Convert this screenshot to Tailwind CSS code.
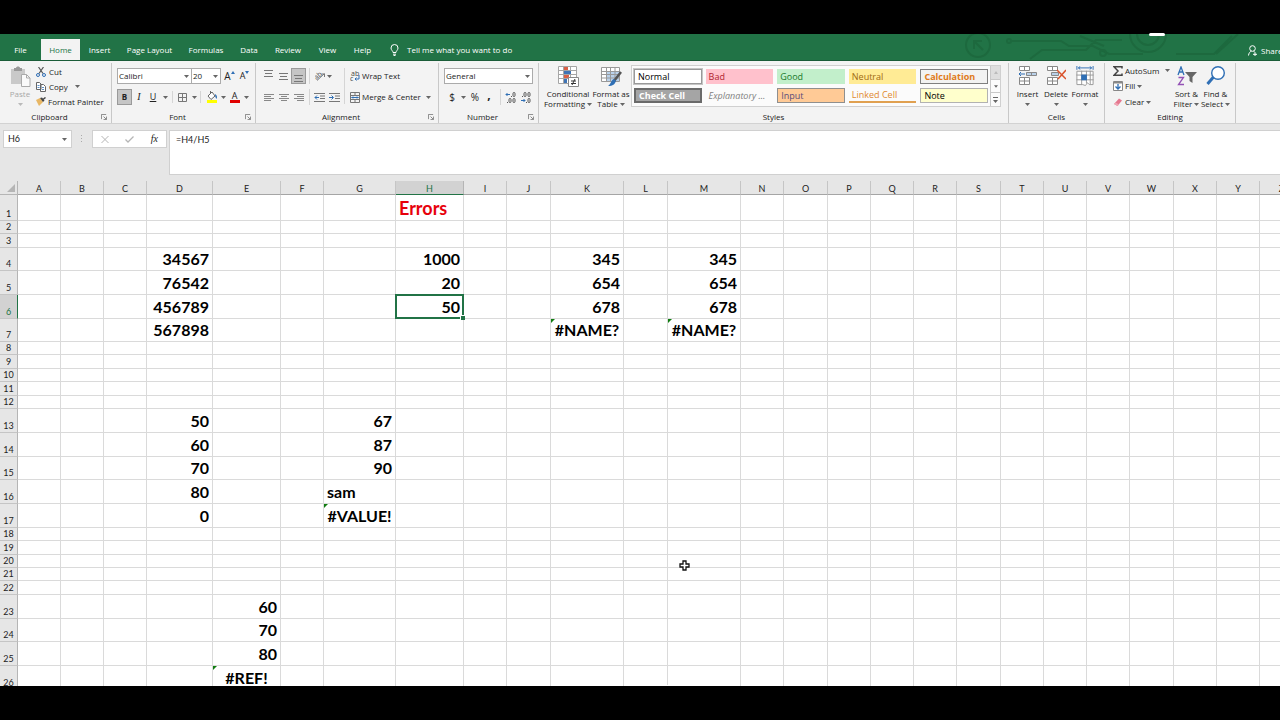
<!DOCTYPE html>
<html lang="en">
<head>
  <meta charset="UTF-8">
  <meta name="viewport" content="width=device-width, initial-scale=1.0">
  <title>Excel errors</title>
  <script src="https://cdn.jsdelivr.net/npm/@tailwindcss/browser@4"></script>
</head>
<body class="bg-black">
  <!-- Shared icons -->
  <svg class="hidden">
    <symbol id="caret" viewBox="0 0 5 3"><path d="M0 0h5L2.5 3z" fill="#666"/></symbol>
    <symbol id="launcher" viewBox="0 0 7 7"><path d="M.5 6V.5H6M3 3l3 3M6.5 3v3.5H3" fill="none" stroke="#777"/></symbol>
  </svg>

  <div class="relative flex h-screen flex-col overflow-hidden py-[34px] font-['Open_Sans',sans-serif] text-[8px] leading-[10px] text-[#222]">

    <!-- Tabs -->
    <header class="relative flex h-[27px] shrink-0 items-end overflow-hidden border-b border-[#1a5c38] bg-[#217346] text-white">
      <svg class="absolute right-0 top-0 h-[26px] w-[320px]" viewBox="0 0 320 26" fill="none" stroke="#1d693e" stroke-width="2">
        <circle cx="18" cy="11" r="12"/><path d="M14 15V7h8M14 7l9 9"/>
        <circle cx="49" cy="7" r="2"/><path d="M51 7h50l8 5h24l16 8h34M70 25l12-9h44l10-10h26M216 20h38l18-18M120 2l24 10"/>
        <circle cx="188" cy="0" r="18"/><circle cx="188" cy="0" r="11"/><circle cx="143" cy="19" r="3"/><path d="M256 20l22-20"/>
      </svg>
      <nav class="flex h-[21px] items-stretch text-center">
        <a href="#" class="flex w-[41px] items-center justify-center">File</a>
        <a href="#" class="flex w-[39px] items-center justify-center bg-[#f3f3f3] text-[#217346]">Home</a>
        <a href="#" class="flex w-[39px] items-center justify-center">Insert</a>
        <a href="#" class="flex w-[61px] items-center justify-center">Page Layout</a>
        <a href="#" class="flex w-[52px] items-center justify-center">Formulas</a>
        <a href="#" class="flex w-[34px] items-center justify-center">Data</a>
        <a href="#" class="flex w-[44px] items-center justify-center">Review</a>
        <a href="#" class="flex w-[35px] items-center justify-center">View</a>
        <a href="#" class="flex w-[35px] items-center justify-center">Help</a>
      </nav>
      <button class="ml-2.5 flex h-[21px] items-center gap-2">
        <svg class="h-[12px] w-[9px]" viewBox="0 0 9 12" fill="none" stroke="#fff"><path d="M3 8.5C3 6.8 1 6.200 1 4a3.500 3.500 0 0 1 7 0c0 2.200-2 2.800-2 4.500zM3 10.200h3M3.500 11.500h2"/></svg>
        Tell me what you want to do
      </button>
      <button class="absolute left-[1248px] top-[6px] flex h-[21px] items-center gap-1">
        <svg class="h-[11px] w-[9px]" viewBox="0 0 9 11" fill="none" stroke="#fff"><circle cx="4.500" cy="3.500" r="2.800"/><path d="M.5 10.500C.8 8 2 6.500 3.500 6.200M5.500 6.200c.8.300 1.200.8 1.500 1.300M5 9.300h4M7 7.500v3.500"/></svg>
        Share
      </button>
    </header>

    <!-- Ribbon -->
    <section class="flex h-[63px] shrink-0 border-b border-[#d2d2d2] bg-[#f3f3f3] pt-0.5">

      <!-- Clipboard -->
      <div class="flex w-[112px] shrink-0 flex-col border-r border-[#c8c8c8]">
        <div class="flex h-[49px] gap-1 pl-2">
          <button class="flex w-6 flex-col items-center text-[#a8a8a8]">
            <svg class="mt-[3px] h-[21px] w-[21px]" viewBox="0 0 21 21"><path d="M1 3h14v15H1z" fill="#c9c9c9"/><path d="M4 2h2c0-2 4-2 4 0h2v3H4z" fill="#999"/><path d="M11.500 8.500h5l3.500 3.500v8.500h-8.500z" fill="#fafafa" stroke="#aaa"/><path d="M16.500 8.500V12H20" fill="none" stroke="#aaa"/></svg>
            <span class="mt-0.5">Paste</span>
            <svg class="mt-1 h-[3px] w-[5px] opacity-40"><use href="#caret"/></svg>
          </button>
          <div class="flex flex-col pt-px">
            <button class="flex h-[15px] items-center gap-[3px]">
              <svg class="h-[10px] w-[10px]" viewBox="0 0 10 10" fill="none"><path d="M2.500 0l4.500 6.500M7.500 0L3 6.500" stroke="#555" stroke-width="1.200"/><circle cx="2" cy="8" r="1.500" stroke="#2f6fb5"/><circle cx="8" cy="8" r="1.500" stroke="#2f6fb5"/></svg>
              Cut
            </button>
            <button class="flex h-[15px] items-center gap-[3px]">
              <svg class="h-[10px] w-[10px]" viewBox="0 0 10 10" fill="#fff" stroke="#666"><path d="M.5.5h3l1.500 1.500v5.500H.5zM4.500 2.500h3L9.500 4.500v5h-5z"/><path d="M1.500 3.500h2M1.500 5.500h2M6 5.500h2M6 7.500h2" stroke="#5b8fc7"/></svg>
              Copy
              <svg class="ml-1 h-[3px] w-[5px]"><use href="#caret"/></svg>
            </button>
            <button class="flex h-[15px] items-center gap-[2px]">
              <svg class="h-[9px] w-[10px]" viewBox="0 0 10 9"><path d="M0 3l4-2 3 4-4 4z" fill="#e8b765"/><path d="M4 1l2-.500 2.500 3L7 5z" fill="#444"/><path d="M7 2.500L9.500.5" stroke="#444" stroke-width="1.500"/></svg>
              Format Painter
            </button>
          </div>
        </div>
        <div class="flex items-center pr-0.5"><span class="flex-1 text-center">Clipboard</span><button class="p-[2px]" aria-label="Clipboard settings"><svg class="h-[6px] w-[6px]"><use href="#launcher"/></svg></button></div>
      </div>

      <!-- Font -->
      <div class="flex w-[144px] shrink-0 flex-col border-r border-[#c8c8c8]">
        <div class="flex h-[49px] flex-col gap-[5px] pl-[5px] pt-[5px]">
          <div class="flex h-4 items-center">
            <div class="relative h-4 w-[75px]">
              <select aria-label="Font" class="h-4 w-full appearance-none border border-[#ababab] bg-white pl-px leading-[14px]"><option>Calibri</option></select>
              <svg class="pointer-events-none absolute right-[3px] top-[7px] h-[3px] w-[5px]"><use href="#caret"/></svg>
            </div>
            <div class="relative h-4 w-[29px]">
              <select aria-label="Font size" class="h-4 w-full appearance-none border border-l-0 border-[#ababab] bg-white pl-px leading-[14px]"><option>20</option></select>
              <svg class="pointer-events-none absolute right-[3px] top-[7px] h-[3px] w-[5px]"><use href="#caret"/></svg>
            </div>
            <button class="ml-px flex w-[15px] justify-center text-[10px]">A<svg class="h-[3px] w-[4px]" viewBox="0 0 4 3"><path d="M0 3l2-3 2 3z" fill="#2f6fb5"/></svg></button>
            <button class="flex w-[15px] justify-center text-[9px]">A<svg class="h-[3px] w-[4px]" viewBox="0 0 4 3"><path d="M0 0h4L2 3z" fill="#2f6fb5"/></svg></button>
          </div>
          <div class="flex h-4 items-center">
            <button class="h-4 w-[15px] border border-[#9a9a9a] bg-[#c5c5c5] font-bold">B</button>
            <button class="w-[14px] font-['Liberation_Serif',serif] text-[10px] italic">I</button>
            <button class="w-[14px] text-[9px] underline">U</button>
            <button class="flex w-[10px] justify-center" aria-label="Underline style"><svg class="h-[3px] w-[5px]"><use href="#caret"/></svg></button>
            <i class="mx-0.5 h-3 w-px bg-[#d5d5d5]"></i>
            <button class="flex w-[15px] justify-center" aria-label="Borders"><svg class="h-[9px] w-[9px]" viewBox="0 0 9 9" fill="none" stroke="#777"><path d="M.5.5h8v8h-8zM4.500 0v9M0 4.500h9"/></svg></button>
            <button class="flex w-[8px] justify-center" aria-label="Border style"><svg class="h-[3px] w-[5px]"><use href="#caret"/></svg></button>
            <i class="mx-0.5 h-3 w-px bg-[#d5d5d5]"></i>
            <button class="flex w-[17px] justify-center" aria-label="Fill colour"><svg class="h-[12px] w-[12px]" viewBox="0 0 12 12"><path d="M2 5l4-4 3 4-4 3.500z" fill="#fff" stroke="#666"/><path d="M4.500 3V0" stroke="#666"/><path d="M9 3c2 1 2.500 3 1.500 5C9.500 7 9 5 9 3" fill="#2f6fb5"/><path d="M1 9h10v3H1z" fill="#ff0"/></svg></button>
            <button class="flex w-[7px] justify-center" aria-label="Fill colours"><svg class="h-[3px] w-[5px]"><use href="#caret"/></svg></button>
            <button class="flex w-[15px] flex-col items-center text-[9px] leading-[9px]">A<span class="h-[3px] w-[10px] bg-[#e00000]"></span></button>
            <button class="flex w-[8px] justify-center" aria-label="Font colours"><svg class="h-[3px] w-[5px]"><use href="#caret"/></svg></button>
          </div>
        </div>
        <div class="flex items-center pr-0.5"><span class="flex-1 text-center">Font</span><button class="p-[2px]" aria-label="Font settings"><svg class="h-[6px] w-[6px]"><use href="#launcher"/></svg></button></div>
      </div>

      <!-- Alignment -->
      <div class="flex w-[183px] shrink-0 flex-col border-r border-[#c8c8c8]">
        <div class="flex h-[49px] items-start pl-[5px] pt-[5px]">
          <div class="flex flex-col gap-[5px]">
            <div class="flex h-4 items-center">
              <button class="flex h-4 w-[15px] justify-center pt-0.5" aria-label="Top align"><svg class="h-[7px] w-[9px]" viewBox="0 0 9 7" stroke="#777"><path d="M0 .5h9M1 3.500h7M0 6.500h9"/></svg></button>
              <button class="flex h-4 w-[15px] items-center justify-center" aria-label="Middle align"><svg class="h-[7px] w-[9px]" viewBox="0 0 9 7" stroke="#777"><path d="M0 .5h9M1 3.500h7M0 6.500h9"/></svg></button>
              <button class="flex h-4 w-[15px] items-end justify-center border border-[#9a9a9a] bg-[#c5c5c5] pb-px" aria-label="Bottom align"><svg class="h-[7px] w-[9px]" viewBox="0 0 9 7" stroke="#777"><path d="M0 .5h9M1 3.500h7M0 6.500h9"/></svg></button>
              <i class="ml-[3px] mr-[2px] h-4 w-px bg-[#d5d5d5]"></i>
              <button class="flex w-[30px] items-center gap-[2px] pl-[3px]" aria-label="Orientation">
                <svg class="h-[10px] w-[10px]" viewBox="0 0 10 10"><path d="M2 9.500L9.500 2.500M6.500 3h3v3" fill="none" stroke="#777"/><text x="-1" y="7" font-size="7" fill="#444" transform="rotate(-40 3 5)">ab</text></svg>
                <svg class="h-[3px] w-[5px]"><use href="#caret"/></svg>
              </button>
            </div>
            <div class="flex h-4 items-center">
              <button class="flex w-[15px] justify-center" aria-label="Align left"><svg class="h-[7px] w-[10px]" viewBox="0 0 10 7" stroke="#888"><path d="M0 .5h10M0 2.500h7M0 4.500h10M0 6.500h7"/></svg></button>
              <button class="flex w-[15px] justify-center" aria-label="Centre"><svg class="h-[7px] w-[10px]" viewBox="0 0 10 7" stroke="#888"><path d="M0 .5h10M2 2.500h6M0 4.500h10M2 6.500h6"/></svg></button>
              <button class="flex w-[15px] justify-center" aria-label="Align right"><svg class="h-[7px] w-[10px]" viewBox="0 0 10 7" stroke="#888"><path d="M0 .5h10M3 2.500h7M0 4.500h10M3 6.500h7"/></svg></button>
              <i class="ml-[3px] mr-[2px] h-4 w-px bg-[#d5d5d5]"></i>
              <button class="flex w-[15px] justify-center" aria-label="Decrease indent"><svg class="h-[9px] w-[11px]" viewBox="0 0 11 9" fill="none" stroke="#777"><path d="M0 .5h11M6 3h5M6 5.500h5M0 8.500h11"/><path d="M5 4.500H1M3 2.500l-2 2 2 2" stroke="#2f6fb5"/></svg></button>
              <button class="flex w-[15px] justify-center" aria-label="Increase indent"><svg class="h-[9px] w-[11px]" viewBox="0 0 11 9" fill="none" stroke="#777"><path d="M0 .5h11M6 3h5M6 5.500h5M0 8.500h11"/><path d="M0 4.500h4M2.500 2.500l2 2-2 2" stroke="#2f6fb5"/></svg></button>
            </div>
          </div>
          <i class="ml-[2px] mr-[5px] h-9 w-px bg-[#d5d5d5]"></i>
          <div class="flex flex-col gap-[5px]">
            <button class="flex h-4 items-center gap-[2px]">
              <svg class="h-[11px] w-[10px]" viewBox="0 0 10 11"><text x="1" y="5" font-size="7" fill="#444">ab</text><text x="0" y="10" font-size="7" fill="#444">c</text><path d="M9 4v4H5M6.500 6.500L5 8l1.500 1.500" fill="none" stroke="#2f6fb5"/></svg>
              Wrap Text
            </button>
            <button class="flex h-4 items-center gap-[2px]">
              <svg class="h-[11px] w-[10px]" viewBox="0 0 10 11" fill="none" stroke="#777"><path d="M.5.5h9v10h-9zM0 3.500h10M0 7.500h10M5 0v3.500M5 7.500V11"/><path d="M1.500 5.500h7M3 4.500l-1 1 1 1M7 4.500l1 1-1 1" stroke="#2f6fb5"/></svg>
              Merge &amp; Center
              <svg class="ml-[3px] h-[3px] w-[5px]"><use href="#caret"/></svg>
            </button>
          </div>
        </div>
        <div class="flex items-center pr-0.5"><span class="flex-1 text-center">Alignment</span><button class="p-[2px]" aria-label="Alignment settings"><svg class="h-[6px] w-[6px]"><use href="#launcher"/></svg></button></div>
      </div>

      <!-- Number -->
      <div class="flex w-[100px] shrink-0 flex-col border-r border-[#c8c8c8]">
        <div class="flex h-[49px] flex-col gap-[5px] pl-[5px] pt-[5px]">
          <div class="relative h-4 w-[89px]">
            <select aria-label="Number format" class="h-4 w-full appearance-none border border-[#ababab] bg-white pl-px leading-[14px]"><option>General</option></select>
            <svg class="pointer-events-none absolute right-[3px] top-[7px] h-[3px] w-[5px]"><use href="#caret"/></svg>
          </div>
          <div class="flex h-4 items-center">
            <button class="w-4 text-[10px]">$</button>
            <button class="flex w-[7px] justify-center" aria-label="Currency"><svg class="h-[3px] w-[5px]"><use href="#caret"/></svg></button>
            <button class="w-4 text-[10px]">%</button>
            <button class="w-3 pb-1 text-[12px] font-bold">,</button>
            <i class="ml-[5px] mr-[2px] h-4 w-px bg-[#d5d5d5]"></i>
            <button class="flex w-[15px] justify-center" aria-label="Increase decimal"><svg class="h-[11px] w-[11px]" viewBox="0 0 11 11"><path d="M5 2.500H1M2.500 1L1 2.500 2.500 4" fill="none" stroke="#2f6fb5"/><g fill="none" stroke="#555"><rect x="8" y=".5" width="2" height="4" rx="1"/><rect x="4" y="6.500" width="2" height="4" rx="1"/><rect x="8" y="6.500" width="2" height="4" rx="1"/></g><path d="M6 4h1v1H6zM2 10h1v1H2z" fill="#555"/></svg></button>
            <button class="flex w-[15px] justify-center" aria-label="Decrease decimal"><svg class="h-[11px] w-[11px]" viewBox="0 0 11 11"><path d="M1 8.500h4M3.500 7L5 8.500 3.500 10" fill="none" stroke="#2f6fb5"/><g fill="none" stroke="#555"><rect x="4" y=".5" width="2" height="4" rx="1"/><rect x="8" y=".5" width="2" height="4" rx="1"/><rect x="8" y="6.500" width="2" height="4" rx="1"/></g><path d="M2 4h1v1H2zM6 10h1v1H6z" fill="#555"/></svg></button>
          </div>
        </div>
        <div class="flex items-center pr-0.5"><span class="flex-1 text-center">Number</span><button class="p-[2px]" aria-label="Number settings"><svg class="h-[6px] w-[6px]"><use href="#launcher"/></svg></button></div>
      </div>

      <!-- Styles -->
      <div class="flex w-[470px] shrink-0 flex-col border-r border-[#c8c8c8]">
        <div class="flex h-[49px] pl-1.5">
          <button class="flex w-[46px] flex-col items-center">
            <svg class="mt-[3px] h-[21px] w-[21px]" viewBox="0 0 21 21" fill="none"><path d="M.5.5h18v17H.5zM0 4.500h19M0 8.500h19M0 12.500h19M5.500 0v18M12.500 0v18" stroke="#a5a5a5" fill="#fff"/><path d="M6 1h4v3H6zM6 9h5v3H6z" fill="#d95f45"/><path d="M6 5h7v3H6zM6 13h3v4H6z" fill="#3f74b5"/><path d="M10.500 11.500h10v9h-10z" fill="#fff" stroke="#888"/><path d="M13 15h5M13 17.500h5M17 13l-3 6" stroke="#333"/></svg>
            <span class="mt-0.5">Conditional</span>
            <span class="flex items-center gap-0.5">Formatting <svg class="h-[3px] w-[5px]"><use href="#caret"/></svg></span>
          </button>
          <button class="flex w-10 flex-col items-center">
            <svg class="mt-[3px] h-[21px] w-[21px]" viewBox="0 0 21 21" fill="none"><path d="M.5 1.500h18v14H.5z" fill="#fff"/><path d="M5 5h14v10H5z" fill="#b9d1ea"/><path d="M.5 1.500h18v14H.5zM0 5.500h19M0 8.500h19M0 12H19M5.500 1v15M9.500 1v15M14 1v15" stroke="#999"/><path d="M20 6l-7 9" stroke="#555" stroke-width="2.500"/><path d="M13 13l2 2c-1 3-3 5-8 5 3-2 3-6 6-7" fill="#2f6fb5"/></svg>
            <span class="mt-0.5 whitespace-nowrap">Format as</span>
            <span class="flex items-center gap-0.5">Table <svg class="h-[3px] w-[5px]"><use href="#caret"/></svg></span>
          </button>
          <div class="mt-0.5 flex h-[42px] w-[370px] border border-[#d0d0d0] bg-[#fbfbfb]">
            <div class="grid flex-1 grid-cols-5 grid-rows-2 gap-1 px-0.5 py-[3px] text-left text-[9px] *:px-[3px] *:text-left">
              <button class="border border-[#999] bg-white text-black outline outline-[#c5c5c5]">Normal</button>
              <button class="bg-[#ffc1cc] text-[#b01e2e]">Bad</button>
              <button class="bg-[#c2efcb] text-[#1a7a2a]">Good</button>
              <button class="bg-[#ffeb95] text-[#a06a10]">Neutral</button>
              <button class="border border-[#7f7f7f] bg-[#f2f2f2] font-bold text-[#e07a20]">Calculation</button>
              <button class="border-2 border-[#6a6a6a] bg-[#a5a5a5] font-bold text-white">Check Cell</button>
              <button class="whitespace-nowrap italic text-[#7f7f7f]">Explanatory ...</button>
              <button class="border border-[#8f8f8f] bg-[#ffca96] text-[#5a4a7a]">Input</button>
              <button class="border-b-2 border-[#e0a050] text-[#e08a30]">Linked Cell</button>
              <button class="border border-[#b2b2b2] bg-[#ffffcc] text-black">Note</button>
            </div>
            <div class="flex w-[10px] flex-col divide-y divide-[#c8c8c8] border-l border-[#c8c8c8]">
              <button class="flex flex-1 items-center justify-center bg-[#dedede]" aria-label="Previous styles"><svg class="h-[3px] w-[4px]" viewBox="0 0 4 3"><path d="M0 3l2-3 2 3z" fill="#bbb"/></svg></button>
              <button class="flex flex-1 items-center justify-center" aria-label="Next styles"><svg class="h-[3px] w-[4px]"><use href="#caret"/></svg></button>
              <button class="flex flex-1 items-center justify-center" aria-label="More styles"><svg class="h-[6px] w-[5px]" viewBox="0 0 5 6"><path d="M0 0h5v1H0zM0 3h5L2.500 6z" fill="#666"/></svg></button>
            </div>
          </div>
        </div>
        <span class="text-center">Styles</span>
      </div>

      <!-- Cells -->
      <div class="flex w-[96px] shrink-0 flex-col border-r border-[#c8c8c8]">
        <div class="flex h-[49px] pl-1">
          <button class="flex w-[29px] flex-col items-center">
            <svg class="mt-[3px] h-[20px] w-[19px]" viewBox="0 0 19 20" fill="#fff" stroke="#888"><path d="M1.500.5h10v4h-10zM6.500.5v4M1.500 11.500h10v7h-10zM1.500 15h10M6.500 11.500v7"/><path d="M8.500 6.500h10v3h-10zM13.500 6.500v3" fill="#b9d1ea"/><path d="M7 8H1M3 6L1 8l2 2" fill="none" stroke="#2f6fb5"/></svg>
            <span class="mt-[3px]">Insert</span>
            <svg class="mt-1 h-[3px] w-[5px]"><use href="#caret"/></svg>
          </button>
          <button class="flex w-[28px] flex-col items-center">
            <svg class="mt-[3px] h-[20px] w-[20px]" viewBox="0 0 20 20" fill="#fff" stroke="#888"><path d="M1.500.5h10v4h-10zM6.500.5v4M1.500 11.500h10v7h-10zM1.500 15h10M6.500 11.500v7"/><path d="M5.500 6.500h7v3h-7z" fill="#b9d1ea"/><path d="M11 4l9 9M20 4l-8 9" stroke="#d9532c" stroke-width="1.500"/></svg>
            <span class="mt-[3px]">Delete</span>
            <svg class="mt-1 h-[3px] w-[5px]"><use href="#caret"/></svg>
          </button>
          <button class="flex w-[30px] flex-col items-center">
            <svg class="mt-[3px] h-[20px] w-[20px]" viewBox="0 0 20 21" fill="none" stroke="#999"><path d="M1.500 5.500h17v14h-4l-2-2-2 3-3-1h-6zM1 9.500h18M1 14.500h18M6.500 5v15M11.500 5v13M15.500 5v14" fill="#fff"/><path d="M6 9h6v6H6z" fill="#2f6fb5" stroke="none"/><path d="M1.500 0v4M18.500 0v4M3 2h14M5 .5L3 2l2 1.500M15 .5L17 2l-2 1.500" stroke="#2f6fb5"/></svg>
            <span class="mt-[3px]">Format</span>
            <svg class="mt-1 h-[3px] w-[5px]"><use href="#caret"/></svg>
          </button>
        </div>
        <span class="text-center">Cells</span>
      </div>

      <!-- Editing -->
      <div class="flex w-[131px] shrink-0 flex-col border-r border-[#c8c8c8]">
        <div class="flex h-[49px] pl-2">
          <div class="flex w-[60px] flex-col">
            <button class="flex h-[15px] items-center gap-[2px]">
              <svg class="h-[10px] w-[10px]" viewBox="0 0 10 10" fill="none" stroke="#444" stroke-width="1.500"><path d="M9 2.500V.8H1L5 5 1 9.200h8V7.500"/></svg>
              AutoSum
              <svg class="ml-1 h-[3px] w-[5px]"><use href="#caret"/></svg>
            </button>
            <button class="flex h-4 items-center gap-[2px]">
              <svg class="h-[10px] w-[10px]" viewBox="0 0 10 10" fill="#fff" stroke="#888"><path d="M.5.5h9v9h-9z"/><path d="M1 1h8v1H1z" fill="#888"/><path d="M5 3v5M2.500 5.500L5 8l2.500-2.500" fill="none" stroke="#2f6fb5" stroke-width="1.300"/></svg>
              Fill
              <svg class="h-[3px] w-[5px]"><use href="#caret"/></svg>
            </button>
            <button class="flex h-4 items-center gap-[2px]">
              <svg class="h-[9px] w-[10px]" viewBox="0 0 10 9"><path d="M1 6l5-5.500 3 2L4.500 8z" fill="#e5788f"/><path d="M1 6l1.500-1.500L6 6.500 4.500 8z" fill="#f0a5b4"/></svg>
              Clear
              <svg class="h-[3px] w-[5px]"><use href="#caret"/></svg>
            </button>
          </div>
          <button class="flex w-[27px] flex-col items-center">
            <svg class="mt-[3px] h-[20px] w-[20px]" viewBox="0 0 20 20" fill="none"><path d="M1 9l3-8 3 8M2 6h4" stroke="#2f6fb5" stroke-width="1.300"/><path d="M1.500 11.500h5l-5 7h5.500" stroke="#9351b5" stroke-width="1.300"/><path d="M8 6h12l-4.500 5v6l-3-2v-4z" fill="#666"/></svg>
            <span class="mt-[3px] whitespace-nowrap">Sort &amp;</span>
            <span class="flex items-center gap-0.5">Filter <svg class="h-[3px] w-[5px]"><use href="#caret"/></svg></span>
          </button>
          <button class="flex w-[31px] flex-col items-center">
            <svg class="mt-[3px] h-[20px] w-[20px]" viewBox="0 0 20 20"><path d="M7.500 11L1.500 18" stroke="#2f6fb5" stroke-width="3"/><circle cx="12" cy="7" r="6.300" fill="#fff" stroke="#2f6fb5" stroke-width="1.400"/></svg>
            <span class="mt-[3px] whitespace-nowrap">Find &amp;</span>
            <span class="flex items-center gap-0.5">Select <svg class="h-[3px] w-[5px]"><use href="#caret"/></svg></span>
          </button>
        </div>
        <span class="text-center">Editing</span>
      </div>
    </section>

    <!-- Formula bar -->
    <section class="flex h-[57px] shrink-0 items-start bg-[#e6e6e6] pl-[3px] pt-1.5">
      <div class="flex h-[18px] w-[69px] items-center border border-[#d0d0d0] bg-white pr-1">
        <input aria-label="Name box" value="H6" class="min-w-0 flex-1 pl-1 font-['Lato',sans-serif] text-[9px] leading-[12px]">
        <svg class="h-[3px] w-[5px]"><use href="#caret"/></svg>
      </div>
      <svg class="mx-[9px] mt-[5px] h-[8px] w-[2px]" viewBox="0 0 2 8" fill="#aaa"><path d="M0 0h1v1H0zM0 3h1v1H0zM0 6h1v1H0z"/></svg>
      <div class="flex h-[18px] w-[75px] items-center justify-around border border-[#d0d0d0] bg-white">
        <button aria-label="Cancel"><svg class="h-[7px] w-[8px]" viewBox="0 0 8 7" stroke="#b5b5b5"><path d="M.5 0l7 7M7.500 0l-7 7"/></svg></button>
        <button aria-label="Enter"><svg class="h-[7px] w-[9px]" viewBox="0 0 9 7" fill="none" stroke="#b5b5b5" stroke-width="1.300"><path d="M.5 3.500L3 6l5.500-5.500"/></svg></button>
        <button class="font-['Liberation_Serif',serif] text-[10px] italic">fx</button>
      </div>
      <textarea aria-label="Formula" class="ml-0.5 h-[45px] flex-1 resize-none border border-r-0 border-[#d0d0d0] bg-white px-1.5 py-[3px] font-['Lato',sans-serif] text-[9px] leading-[12px]">=H4/H5</textarea>
    </section>

    <!-- Sheet -->
    <main class="min-h-0 flex-1 overflow-hidden bg-white">
      <table class="w-max table-fixed border-separate border-spacing-0 font-['Lato',sans-serif] text-[9px] leading-[11px]">
        <colgroup id="cols"></colgroup>
        <thead class="bg-[#e6e6e6]"><tr id="letters" class="h-[14px]"></tr></thead>
        <tbody id="rows"></tbody>
      </table>
    </main>

    <!-- Mouse pointer and recorder handles -->
    <svg class="absolute left-[679px] top-[560px] h-[11px] w-[11px]" viewBox="0 0 11 11"><path d="M4 1h3v3h3v3H7v3H4V7H1V4h3z" fill="#fff" stroke="#111" stroke-width="1.300"/></svg>
    <i class="absolute left-[1149px] top-[33px] h-[3px] w-4 rounded bg-white"></i>
    <i class="absolute left-[649px] top-[685px] h-px w-[43px] bg-white"></i>
  </div>

  <script>
    const widths = [18, 43, 43, 43, 66, 68, 43, 72, 68, 43, 44, 73, 44, 73, 43, 44, 43, 43, 43, 44, 43, 43, 43, 44, 43, 43, 44];
    const heights = [26, 13, 14, 23, 24, 24, 23, 13, 14, 13, 14, 13, 24, 24, 23, 24, 24, 13, 14, 13, 13, 14, 24, 23, 24, 24];
    const values = {
      H1: 'Errors',
      D4: 34567, D5: 76542, D6: 456789, D7: 567898,
      H4: 1000, H5: 20, H6: 50,
      K4: 345, K5: 654, K6: 678, K7: '#NAME?',
      M4: 345, M5: 654, M6: 678, M7: '#NAME?',
      D13: 50, D14: 60, D15: 70, D16: 80, D17: 0,
      G13: 67, G14: 87, G15: 90, G16: 'sam', G17: '#VALUE!',
      E23: 60, E24: 70, E25: 80, E26: '#REF!'
    };
    const letters = 'ABCDEFGHIJKLMNOPQRSTUVWXYZ'.split('');

    document.getElementById('cols').innerHTML = widths.map(w => `<col style="width:${w}px">`).join('');

    // Column letters
    document.getElementById('letters').innerHTML =
      '<td class="border-b border-r border-[#b5b5b5] p-0"><svg class="ml-auto mr-[2px] h-[8px] w-[8px]" viewBox="0 0 8 8"><path d="M8 0v8H0z" fill="#b5b5b5"/></svg></td>' +
      letters.map(l => l === 'H'
        ? '<th class="border-b border-r border-b-[#217346] border-r-[#b5b5b5] bg-[#d2d2d2] p-0 pt-px font-normal text-[#217346]">H</th>'
        : `<th class="border-b border-r border-b-[#a5a5a5] border-r-[#c5c5c5] p-0 pt-px font-normal">${l}</th>`).join('');

    // Cell contents, errors get the green corner
    function cellContent(name) {
      const value = values[name];
      if (value === undefined) return '';
      if (name === 'H1') return '<div class="px-[3px] text-left text-[18px] text-red-600">Errors</div>';
      if (typeof value === 'number') return `<div class="px-[3px] text-right">${value}</div>`;
      if (value[0] === '#') return `<div class="text-center">${value}</div><svg class="absolute left-0 top-0 h-1 w-1" viewBox="0 0 4 4"><path d="M0 0h4L0 4z" fill="#107c10"/></svg>`;
      return `<div class="px-[3px] text-left">${value}</div>`;
    }

    document.getElementById('rows').innerHTML = heights.map((h, i) => {
      const n = i + 1;
      const head = n === 6
        ? '<th class="border-b border-r border-b-[#c5c5c5] border-r-[#217346] bg-[#d2d2d2] p-0 pb-px align-bottom font-normal text-[#217346]">6</th>'
        : `<th class="border-b border-r border-b-[#c5c5c5] border-r-[#b5b5b5] bg-[#e6e6e6] p-0 pb-px align-bottom font-normal">${n}</th>`;
      const cells = letters.map(l => {
        const frame = l + n === 'H6'
          ? '<span class="absolute -inset-px z-10 border-2 border-[#217346]"></span><span class="absolute -bottom-0.5 -right-0.5 z-10 size-[5px] border-l border-t border-white bg-[#217346]"></span>'
          : '';
        return `<td class="relative whitespace-nowrap border-b border-r border-[#dadada] p-0 text-[16px] leading-[20px] font-bold text-black">${cellContent(l + n)}${frame}</td>`;
      }).join('');
      return `<tr style="height:${h}px">${head}${cells}</tr>`;
    }).join('');
  </script>
</body>
</html>
